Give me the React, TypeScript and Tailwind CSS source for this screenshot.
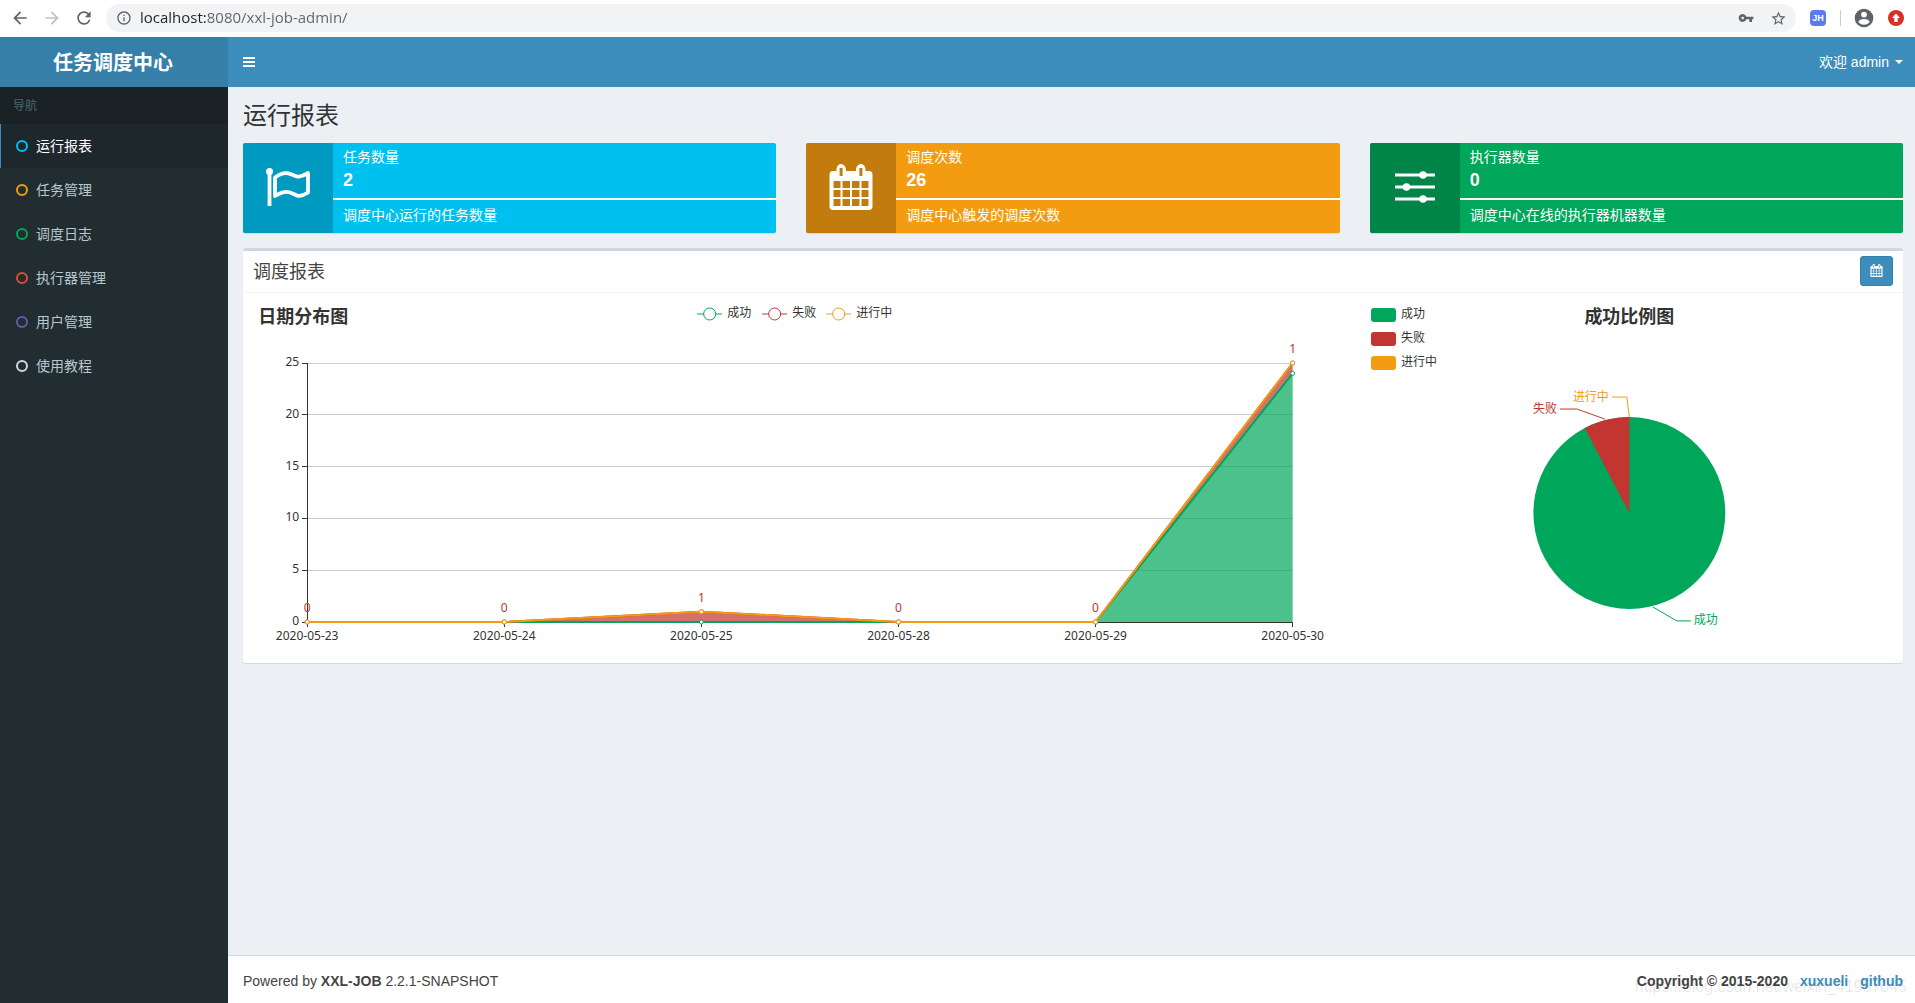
import {
  MdArrowBack,
  MdArrowForward,
  MdInfoOutline,
  MdRefresh,
  MdStarBorder,
  MdVpnKey,
} from 'react-icons/md';

const SUCCESS = '#00A65A';
const FAIL = '#c23531';
const RUNNING = '#F39C12';

const menu = [
  { name: '运行报表', ring: 'border-[#00c0ef]', active: true },
  { name: '任务管理', ring: 'border-[#f39c12]' },
  { name: '调度日志', ring: 'border-[#00a65a]' },
  { name: '执行器管理', ring: 'border-[#dd4b39]' },
  { name: '用户管理', ring: 'border-[#605ca8]' },
  { name: '使用教程', ring: 'border-[#d2d6de]' },
];

const infoBoxes = [
  { title: '任务数量', value: 2, desc: '调度中心运行的任务数量', bg: 'bg-[#00c0ef]', icon: <FlagIcon /> },
  { title: '调度次数', value: 26, desc: '调度中心触发的调度次数', bg: 'bg-[#f39c12]', icon: <CalendarIcon className="h-[46px] w-[44px]" /> },
  { title: '执行器数量', value: 0, desc: '调度中心在线的执行器机器数量', bg: 'bg-[#00a65a]', icon: <SlidersIcon /> },
];

const report = [
  { day: '2020-05-23', success: 0, fail: 0, running: 0 },
  { day: '2020-05-24', success: 0, fail: 0, running: 0 },
  { day: '2020-05-25', success: 0, fail: 1, running: 0 },
  { day: '2020-05-28', success: 0, fail: 0, running: 0 },
  { day: '2020-05-29', success: 0, fail: 0, running: 0 },
  { day: '2020-05-30', success: 24, fail: 1, running: 0 },
];

function FlagIcon() {
  return (
    <svg viewBox="0 0 44 38" className="h-[38px] w-[44px]" fill="none" stroke="#fff">
      <circle cx="3.5" cy="3.5" r="3.5" fill="#fff" stroke="none" />
      <path d="M3.5 4v34" strokeWidth="3.8" />
      <path
        d="M9 9.5C13 6.5 17 4.8 21 5.2C27 6 29 9 33 8.6C36.5 8.2 39.5 6.5 42 5V24.5C39 26.5 35.5 28.3 32 27.8C28 27 26 24 21 23.8C17 23.7 13 25.5 9 28Z"
        strokeWidth="3.8"
        strokeLinejoin="round"
      />
    </svg>
  );
}

function CalendarIcon({ className }: { className: string }) {
  return (
    <svg viewBox="0 0 44 46" className={className} fill="currentColor">
      <path
        fillRule="evenodd"
        d="M4 7H7.5V5.5C7.5 2.5 9.5 0 12 0C14.5 0 17 2.500 17 5.5V7H27V5.5C27 2.5 29.5 0 32 0C34.5 0 36.5 2.5 36.5 5.5V7H40C42.200 7 43.5 8.5 43.5 10.5V42.5C43.5 44.5 42.2 46 40 46H4C1.8 46 0.5 44.5 0.5 42.5V10.5C0.5 8.5 1.8 7 4 7Z
        M10.6 4H13.6V12H10.6Z M30.4 4H33.4V12H30.4Z
        M4.500 17H11.500V24H4.500Z M13.500 17H21V24H13.500Z M23 17H30.500V24H23Z M32.500 17H39.500V24H32.500Z
        M4.500 26H11.500V33H4.500Z M13.500 26H21V33H13.500Z M23 26H30.500V33H23Z M32.500 26H39.500V33H32.500Z
        M4.500 35H11.500V42H4.500Z M13.500 35H21V42H13.500Z M23 35H30.500V42H23Z M32.500 35H39.500V42H32.500Z"
      />
    </svg>
  );
}

function SlidersIcon() {
  return (
    <svg viewBox="0 0 40 32" className="h-8 w-10" fill="#fff">
      <path d="M0 2.5H40V5.5H0ZM0 14.5H40V17.5H0ZM0 26.5H40V29.5H0Z" />
      <circle cx="28" cy="4" r="3.8" />
      <circle cx="11.5" cy="16" r="3.8" />
      <circle cx="28" cy="28" r="3.8" />
    </svg>
  );
}

function BrowserBar() {
  return (
    <div className="flex h-[37px] items-start bg-white pt-1 pr-[11px] pl-[10px] text-[#5f6368]">
      <div className="flex h-7 items-center gap-3">
        <button aria-label="后退"><MdArrowBack className="size-5" /></button>
        <button aria-label="前进" className="text-[#bdc1c6]"><MdArrowForward className="size-5" /></button>
        <button aria-label="刷新"><MdRefresh className="size-5" /></button>
      </div>
      <div className="ml-3 flex h-7 flex-1 items-center rounded-full bg-[#f1f3f4] pr-[9px] pl-[10px]">
        <MdInfoOutline className="size-4" />
        <input
          aria-label="地址"
          defaultValue="localhost:8080/xxl-job-admin/"
          className="ml-2 min-w-0 flex-1 bg-[linear-gradient(to_right,#202124_66px,#5f6368_66px)] bg-clip-text font-['Open_Sans','Noto_Sans',sans-serif] text-[15px] text-transparent outline-none"
        />
        <button aria-label="密码"><MdVpnKey className="size-4" /></button>
        <button aria-label="收藏" className="ml-4"><MdStarBorder className="size-[17px]" /></button>
      </div>
      <div className="ml-[14px] flex h-7 items-center">
        <span className="flex size-4 items-center justify-center rounded-sm bg-[#5b7cf0] text-[9px] font-bold text-white">JH</span>
        <span className="ml-[14px] h-4 w-px bg-[#c8cbd0]" />
        <svg viewBox="0 0 20 20" className="ml-[13px] size-5">
          <circle cx="10" cy="10" r="9.3" fill="#5f6368" />
          <circle cx="10" cy="6.6" r="2.9" fill="#fff" />
          <path d="M4.300 13.800C5.200 11.800 8 11.100 10 11.100C12 11.100 14.800 11.800 15.700 13.800C14.500 15.700 12.400 16.700 10 16.700C7.600 16.700 5.500 15.700 4.300 13.800Z" fill="#fff" />
        </svg>
        <svg viewBox="0 0 16 16" className="ml-[14px] size-4">
          <circle cx="8" cy="8" r="8" fill="#d93025" />
          <path d="M8 3.5L12 8H9.7V12H6.3V8H4Z" fill="#fff" />
        </svg>
      </div>
    </div>
  );
}

function TrendChart() {
  const left = 54;
  const bottom = 319;
  const xAt = (i: number) => left + i * 197.1;
  const yAt = (v: number) => bottom - v * 10.36;
  const legend = [
    { name: '成功', color: SUCCESS, x: 444 },
    { name: '失败', color: FAIL, x: 509 },
    { name: '进行中', color: RUNNING, x: 573 },
  ];
  // stacked series: every one starts on top of the one before it
  const base = report.map(() => 0);
  const series = [
    { color: SUCCESS, values: report.map((r) => r.success) },
    { color: FAIL, values: report.map((r) => r.success + r.fail) },
    { color: RUNNING, values: report.map((r) => r.success + r.fail + r.running) },
  ];
  const points = (values: number[]) => values.map((v, i) => `${xAt(i)},${yAt(v)}`);

  return (
    <svg viewBox="0 0 1083 350" className="col-span-2 h-[350px] w-full overflow-visible" fontSize="12" fill="#333">
      <text x="5" y="20" fontSize="18" fontWeight="bold">日期分布图</text>
      {legend.map((l) => (
        <g key={l.name}>
          <path d={`M${l.x} 11H${l.x + 25}`} stroke={l.color} />
          <circle cx={l.x + 12.5} cy="11" r="6" fill="#fff" stroke={l.color} />
          <text x={l.x + 30} y="14">{l.name}</text>
        </g>
      ))}

      {[0, 5, 10, 15, 20, 25].map((v) => (
        <g key={v}>
          {v > 0 && <path d={`M${left} ${yAt(v)}H${xAt(5)}`} stroke="#ccc" shapeRendering="crispEdges" />}
          <path d={`M${left - 5} ${yAt(v)}h5`} stroke="#333" shapeRendering="crispEdges" />
          <text x={left - 8} y={yAt(v) + 3} textAnchor="end">{v}</text>
        </g>
      ))}
      <path d={`M${left} ${yAt(25)}V${bottom}H${xAt(5)}`} fill="none" stroke="#333" shapeRendering="crispEdges" />
      {report.map((r, i) => (
        <g key={r.day}>
          <path d={`M${xAt(i)} ${bottom}v5`} stroke="#333" shapeRendering="crispEdges" />
          <text x={xAt(i)} y="337" textAnchor="middle">{r.day}</text>
        </g>
      ))}

      {series.map((s, i) => {
        const below = i === 0 ? base : series[i - 1].values;
        const outline = [...points(s.values), ...points(below).reverse()];
        return <polygon key={s.color} points={outline.join(' ')} fill={s.color} fillOpacity="0.7" />;
      })}
      {series.map((s) => (
        <g key={s.color} stroke={s.color}>
          <polyline points={points(s.values).join(' ')} fill="none" strokeWidth="2" strokeLinejoin="bevel" />
          {s.values.map((v, i) => (
            <circle key={i} cx={xAt(i)} cy={yAt(v)} r="2" fill="#fff" />
          ))}
        </g>
      ))}
      {report.map((r, i) => (
        <text key={r.day} x={xAt(i)} y={yAt(r.success + r.fail) - 10} textAnchor="middle" fill={FAIL}>
          {r.fail}
        </text>
      ))}
    </svg>
  );
}

function RatioChart() {
  const legend = [
    { name: '成功', color: SUCCESS },
    { name: '失败', color: FAIL },
    { name: '进行中', color: RUNNING },
  ];
  const angle = (2 / 26) * Math.PI * 2;
  const cx = 263.5;
  const cy = 210;
  const r = 96;
  const edge = `${cx - r * Math.sin(angle)} ${cy - r * Math.cos(angle)}`;

  return (
    <svg viewBox="0 0 527 350" className="h-[350px] w-full" fontSize="12" fill="#333">
      {legend.map((l, i) => (
        <g key={l.name}>
          <rect x="5" y={5 + i * 24} width="25" height="14" rx="3" fill={l.color} />
          <text x="35" y={15 + i * 24}>{l.name}</text>
        </g>
      ))}
      <text x={cx} y="20" fontSize="18" fontWeight="bold" textAnchor="middle">成功比例图</text>

      <circle cx={cx} cy={cy} r={r} fill={SUCCESS} />
      <path d={`M${cx} ${cy}L${edge}A${r} ${r} 0 0 1 ${cx} ${cy - r}Z`} fill={FAIL} />

      <path d="M246 94H261L263.500 114" fill="none" stroke={RUNNING} />
      <text x="243" y="98" textAnchor="end" fill={RUNNING}>进行中</text>
      <path d="M194 106H211L239 116" fill="none" stroke={FAIL} />
      <text x="191" y="110" textAnchor="end" fill={FAIL}>失败</text>
      <path d="M287 304L311 318H325" fill="none" stroke={SUCCESS} />
      <text x="328" y="321" fill={SUCCESS}>成功</text>
    </svg>
  );
}

export default function App() {
  return (
    <div className="flex min-h-screen flex-col font-['Liberation_Sans','Noto_Sans_CJK_SC',sans-serif] text-sm text-[#333]">
      <BrowserBar />

      <div className="flex flex-1">
        <aside className="w-[228px] shrink-0 bg-[#222d32]">
          <a href="#" className="flex h-[50px] items-center justify-center bg-[#367fa9] pt-0.5 pr-0.5 text-xl font-bold text-white">
            任务调度中心
          </a>
          <div className="flex h-[37px] items-center bg-[#1a2226] px-[13px] text-xs text-[#4b646f]">导航</div>
          <nav>
            {menu.map((item) => (
              <a
                key={item.name}
                href="#"
                className={
                  item.active
                    ? 'flex h-11 items-center gap-2 border-l border-[#3c8dbc] bg-[#1e282c] pl-[15px] text-white'
                    : 'flex h-11 items-center gap-2 border-l border-transparent pl-[15px] text-[#b8c7ce]'
                }
              >
                <span className={`size-3 rounded-full border-2 ${item.ring}`} />
                {item.name}
              </a>
            ))}
          </nav>
        </aside>

        <div className="flex min-w-0 flex-1 flex-col bg-[#ecf0f5]">
          <header className="flex h-[50px] items-center justify-between bg-[#3c8dbc] pr-3 pl-[15px] text-white">
            <button aria-label="切换导航" className="flex w-3 flex-col gap-0.5">
              <span className="h-0.5 bg-white" />
              <span className="h-0.5 bg-white" />
              <span className="h-0.5 bg-white" />
            </button>
            <button className="flex items-center gap-1.5">
              欢迎 admin
              <span className="border-x-4 border-t-4 border-x-transparent border-t-white" />
            </button>
          </header>

          <main className="flex-1 pr-3 pl-[15px]">
            <h1 className="pt-4 text-2xl leading-[26px]">运行报表</h1>

            <div className="mt-[14px] grid grid-cols-3 gap-[30px]">
              {infoBoxes.map((box) => (
                <div key={box.title} className={`flex h-[90px] overflow-hidden rounded-xs text-white shadow-[0_1px_1px_rgba(0,0,0,0.1)] ${box.bg}`}>
                  <div className="flex w-[90px] shrink-0 items-center justify-center bg-black/20 pb-0.5">{box.icon}</div>
                  <div className="min-w-0 flex-1 pt-1">
                    <div className="px-[10px] leading-5">{box.title}</div>
                    <div className="px-[10px] text-lg leading-[26px] font-bold">{box.value}</div>
                    <div className="mt-[5px] h-0.5 bg-white" />
                    <div className="truncate px-[10px] leading-[30px]">{box.desc}</div>
                  </div>
                </div>
              ))}
            </div>

            <section className="mt-[15px] rounded-[3px] border-t-[3px] border-[#d2d6de] bg-white shadow-[0_1px_1px_rgba(0,0,0,0.1)]">
              <div className="flex h-[42px] items-center justify-between border-b border-[#f4f4f4] px-[10px]">
                <h3 className="text-lg leading-5 text-[#444]">调度报表</h3>
                <button
                  aria-label="选择日期"
                  className="mb-0.5 flex h-[30px] w-[33px] items-center justify-center rounded-[3px] border border-[#367fa9] bg-[#3c8dbc] text-white"
                >
                  <CalendarIcon className="size-[13px]" />
                </button>
              </div>
              <div className="grid grid-cols-3 gap-x-[30px] p-[10px] font-['Noto_Sans','Noto_Sans_CJK_SC',sans-serif]">
                <TrendChart />
                <RatioChart />
              </div>
            </section>
          </main>

          <footer className="relative flex h-12 items-center justify-between border-t border-[#d2d6de] bg-white pr-3 pl-[15px] text-[#444]">
            <p className="pt-0.5">
              Powered by <b>XXL-JOB</b> 2.2.1-SNAPSHOT
            </p>
            <p className="pt-0.5 font-bold">
              Copyright © 2015-2020
              <a href="#" className="ml-3 text-[#3c8dbc]">xuxueli</a>
              <a href="#" className="ml-3 text-[#3c8dbc]">github</a>
            </p>
            <span className="pointer-events-none absolute right-2 bottom-1 text-base text-black/10">
              https://blog.csdn.net/weixin_41957045
            </span>
          </footer>
        </div>
      </div>
    </div>
  );
}
